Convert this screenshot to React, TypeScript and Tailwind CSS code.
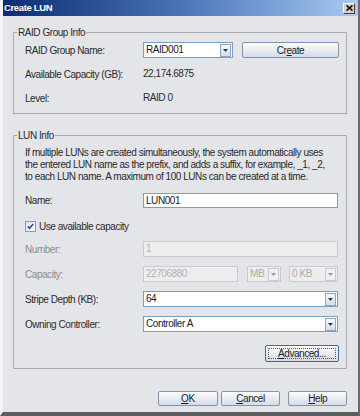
import type { ReactNode } from "react";

function Arrow({ disabled }: { disabled?: boolean }) {
  return (
    <span
      className={`mr-[1px] flex h-[13px] w-[11px] shrink-0 items-center justify-center border ${
        disabled
          ? "border-[#c9cdd2] bg-[#eef0f2]"
          : "border-[#8ea6c2] bg-linear-to-b from-[#f6f8fa] to-[#d6dee8]"
      }`}
    >
      <svg width="5" height="3" viewBox="0 0 5 3">
        <path d="M0 0h5L2.5 3z" fill={disabled ? "#9a9a9a" : "#2c3b52"} />
      </svg>
    </span>
  );
}

function Combo({ value, className, disabled }: { value: string; className: string; disabled?: boolean }) {
  return (
    <div
      className={`flex h-[16px] items-center border ${className} ${
        disabled ? "border-[#c9cccf] bg-[#ededee] text-[#ababab]" : "border-[#7f9db9] bg-white text-[#1a1a1a]"
      }`}
    >
      <span className="flex-1 truncate pl-[2px] leading-[14px]">{value}</span>
      <Arrow disabled={disabled} />
    </div>
  );
}

function Field({ value, className, disabled }: { value: string; className: string; disabled?: boolean }) {
  return (
    <div
      className={`flex items-center border pl-[2px] leading-[14px] ${className} ${
        disabled ? "h-[16px] border-[#c9cccf] bg-[#ededee] text-[#b3b3b3]" : "h-[15px] border-[#7f9db9] bg-white text-[#1a1a1a]"
      }`}
    >
      {value}
    </div>
  );
}

function Button({ children, className, focused }: { children: ReactNode; className: string; focused?: boolean }) {
  return (
    <div
      className={`flex items-center justify-center rounded-[2px] border bg-linear-to-b from-[#fdfdfe] to-[#d5dce6] text-[#1a1a1a] ${className} ${
        focused ? "border-[#3f6b9c] p-[2px]" : "border-[#8194ab]"
      }`}
    >
      {focused ? (
        <span className="flex h-full w-full items-center justify-center border border-dotted border-[#555]">
          {children}
        </span>
      ) : (
        children
      )}
    </div>
  );
}

function Row({ label, children, dim }: { label: string; children: ReactNode; dim?: boolean }) {
  return (
    <div className="flex items-center">
      <span className={`w-[118px] shrink-0 whitespace-nowrap ${dim ? "text-[#8c8c8c]" : ""}`}>{label}</span>
      {children}
    </div>
  );
}

export default function App() {
  return (
    <div className="flex h-[416px] w-[360px] flex-col overflow-hidden border-b-[4px] border-l-[3px] border-r-[2px] border-b-[#5b5d60] border-l-[#f4f4f4] border-r-[#6a6c70] bg-[#e4e5e9] font-['Liberation_Sans',Arial,sans-serif] text-[10px] tracking-[-0.45px] text-[#2a2a2a]">
      <div className="-ml-[3px] -mr-[2px] flex h-[16px] shrink-0 items-center justify-between bg-linear-to-r from-[#0c2a72] via-[#4b73b8] to-[#a8ccf2] pl-[4px] pr-[5px]">
        <span className="text-[9.5px] font-bold leading-none tracking-[-0.35px] text-white">Create LUN</span>
        <span className="flex h-[11px] w-[12px] items-center justify-center border border-b-[#404040] border-l-white border-r-[#404040] border-t-white bg-[#d4d0c8]">
          <svg width="7" height="6" viewBox="0 0 7 6">
            <path d="M0.5 0.5L6.5 5.5M6.5 0.5L0.5 5.5" stroke="#000" strokeWidth="1.6" />
          </svg>
        </span>
      </div>

      <div className="flex flex-1 flex-col pl-[10px] pr-[11px]">
        <fieldset className="mt-[10px] flex flex-col gap-[8px] border border-[#a9abb0] pb-[7px] pl-[11px] pr-[7px] pt-[3px]">
          <legend className="-ml-[8px] px-[1px] leading-[13px]">RAID Group Info</legend>
          <Row label="RAID Group Name:">
            <Combo value="RAID001" className="w-[90px]" />
            <Button className="ml-[9px] h-[16px] w-[97px]">
              <span>
                Cr<span className="underline">e</span>ate
              </span>
            </Button>
          </Row>
          <Row label="Available Capacity (GB):">
            <span className="leading-[16px]">22,174.6875</span>
          </Row>
          <Row label="Level:">
            <span className="leading-[16px]">RAID 0</span>
          </Row>
        </fieldset>

        <fieldset className="mt-[15px] flex flex-col border border-[#a9abb0] pb-[6px] pl-[11px] pr-[8px] pt-[5px]">
          <legend className="-ml-[8px] px-[1px] leading-[13px]">LUN Info</legend>
          <p className="leading-[12px]">
            If multiple LUNs are created simultaneously, the system automatically uses
            <br />
            the entered LUN name as the prefix, and adds a suffix, for example, _1, _2,
            <br />
            to each LUN name. A maximum of 100 LUNs can be created at a time.
          </p>
          <div className="mt-[10px]">
            <Row label="Name:">
              <Field value="LUN001" className="flex-1" />
            </Row>
          </div>
          <div className="mt-[13px] flex h-[11px] items-center gap-[3px]">
            <span className="flex h-[11px] w-[11px] items-center justify-center border border-[#7f9db9] bg-linear-to-br from-[#dfe4ea] to-white">
              <svg width="7" height="7" viewBox="0 0 7 7">
                <path d="M0.8 3.4L2.6 5.3L6.2 1" fill="none" stroke="#2a4f8f" strokeWidth="1.6" />
              </svg>
            </span>
            <span>Use available capacity</span>
          </div>
          <div className="mt-[9px]">
            <Row label="Number:" dim>
              <Field value="1" className="flex-1" disabled />
            </Row>
          </div>
          <div className="mt-[9px]">
            <Row label="Capacity:" dim>
              <Field value="22706880" className="w-[95px]" disabled />
              <Combo value="MB" className="ml-[9px] w-[34px]" disabled />
              <Combo value="0 KB" className="ml-[8px] w-[49px]" disabled />
            </Row>
          </div>
          <div className="mt-[9px]">
            <Row label="Stripe Depth (KB):">
              <Combo value="64" className="flex-1" />
            </Row>
          </div>
          <div className="mt-[9px]">
            <Row label="Owning Controller:">
              <Combo value="Controller A" className="flex-1" />
            </Row>
          </div>
          <div className="mt-[13px] flex justify-end">
            <Button className="-mr-[1px] h-[17px] w-[74px]" focused>
              <span>
                <span className="underline">A</span>dvanced...
              </span>
            </Button>
          </div>
        </fieldset>

        <div className="mt-[22px] flex">
          <Button className="ml-[145px] h-[15px] w-[60px]">
            <span>
              <span className="underline">O</span>K
            </span>
          </Button>
          <Button className="ml-[3px] h-[15px] w-[60px]">
            <span>
              <span className="underline">C</span>ancel
            </span>
          </Button>
          <Button className="ml-[8px] h-[15px] w-[59px]">
            <span>
              <span className="underline">H</span>elp
            </span>
          </Button>
        </div>
      </div>
    </div>
  );
}
